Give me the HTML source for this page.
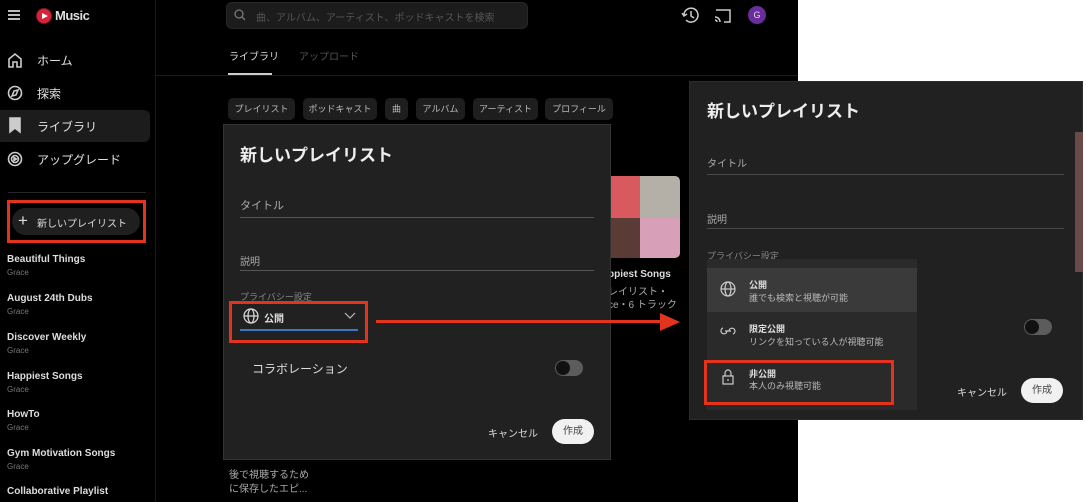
<!DOCTYPE html>
<html><head><meta charset="utf-8"><style>
*{margin:0;padding:0;box-sizing:border-box}
body{width:1086px;height:502px;overflow:hidden;background:#fff;position:relative;font-family:"Liberation Sans","Noto Sans CJK JP",sans-serif;color:#fff}
.a{position:absolute;white-space:nowrap}
.left{position:absolute;left:0;top:0;width:798px;height:502px;background:#000;overflow:hidden}
.nav{font-size:12px;color:#e0e0e0}
.pl{font-size:10px;font-weight:bold;color:#ddd}
.gr{font-size:8px;color:#777}
.chip{position:absolute;top:98px;height:22px;background:#1e1e1e;border-radius:5px;font-size:9px;color:#bbb;text-align:center;line-height:22px}
.dlg{position:absolute;background:#212121;border:1px solid #333}
.lbl{font-size:10px;color:#aaa}
.line{position:absolute;height:1px;background:#555}
.red{position:absolute;border:3px solid #e2341d}
.tog{position:absolute;width:28px;height:16px;border-radius:8px;background:#5c5c5c}
.tog:before{content:"";position:absolute;left:1px;top:1px;width:14px;height:14px;border-radius:50%;background:#111}
.btn{position:absolute;background:#f1f1f1;color:#444;border-radius:13px;font-size:10px;text-align:center}
</style></head><body>
<div class="left">
<div class="a" style="left:8px;top:10px;width:12px;height:2px;background:#bbb;box-shadow:0 4px 0 #bbb,0 8px 0 #bbb"></div>
<div class="a" style="left:37px;top:9px;width:14px;height:14px;border-radius:50%;background:#d9223a;box-shadow:0 0 0 1px #7a1a22"></div>
<div class="a" style="left:42px;top:13px;width:0;height:0;border-left:6px solid #fff;border-top:3.5px solid transparent;border-bottom:3.5px solid transparent"></div>
<div class="a" style="left:55px;top:8px;font-size:13px;font-weight:bold;color:#ddd;letter-spacing:-0.5px">Music</div>
<div class="a" style="left:0;top:110px;width:150px;height:32px;background:#1c1c1c;border-radius:0 6px 6px 0"></div>
<svg class="a" style="left:6px;top:50px" width="18" height="120" fill="none" stroke="#ccc" stroke-width="1.6">
<path d="M3 17V9l6-5 6 5v8h-4v-5H7v5z"/>
<circle cx="9" cy="43" r="6.5"/><path d="M6 46l2-5 4-1-2 5z"/>
<path d="M4 68h10v14l-5-4-5 4z" fill="#ccc"/>
<circle cx="9" cy="109" r="6.5"/><circle cx="9" cy="109" r="3.5"/><path d="M8 107.5l2.5 1.5-2.5 1.5z" fill="#ccc"/>
</svg>
<div class="a nav" style="left:37px;top:52px">ホーム</div>
<div class="a nav" style="left:37px;top:85px">探索</div>
<div class="a nav" style="left:37px;top:118px">ライブラリ</div>
<div class="a nav" style="left:37px;top:151px">アップグレード</div>
<div class="a" style="left:8px;top:192px;width:138px;height:1px;background:#262626"></div>
<div class="a" style="left:155px;top:0;width:1px;height:502px;background:#1a1a1a"></div>
<div class="a" style="left:12px;top:208px;width:128px;height:27px;background:#1f1f1f;border-radius:14px"></div>
<div class="a" style="left:18px;top:211px;font-size:17px;color:#ddd">+</div>
<div class="a" style="left:37px;top:215px;font-size:10px;color:#ddd">新しいプレイリスト</div>
<div class="red" style="left:7px;top:200px;width:139px;height:43px"></div>
<div class="a pl" style="left:7px;top:254px">Beautiful Things</div><div class="a gr" style="left:7px;top:268px">Grace</div>
<div class="a pl" style="left:7px;top:293px">August 24th Dubs</div><div class="a gr" style="left:7px;top:307px">Grace</div>
<div class="a pl" style="left:7px;top:332px">Discover Weekly</div><div class="a gr" style="left:7px;top:346px">Grace</div>
<div class="a pl" style="left:7px;top:371px">Happiest Songs</div><div class="a gr" style="left:7px;top:385px">Grace</div>
<div class="a pl" style="left:7px;top:409px">HowTo</div><div class="a gr" style="left:7px;top:423px">Grace</div>
<div class="a pl" style="left:7px;top:448px">Gym Motivation Songs</div><div class="a gr" style="left:7px;top:462px">Grace</div>
<div class="a pl" style="left:7px;top:486px">Collaborative Playlist</div>
<div class="a" style="left:226px;top:2px;width:302px;height:27px;background:#1c1c1c;border-radius:6px;border:1px solid #262626"></div>
<svg class="a" style="left:234px;top:9px" width="12" height="12" fill="none" stroke="#777" stroke-width="1.3"><circle cx="5" cy="5" r="4"/><path d="M8 8l3 3"/></svg>
<div class="a" style="left:256px;top:9px;font-size:10px;color:#555">曲、アルバム、アーティスト、ポッドキャストを検索</div>
<div class="a" style="left:528px;top:0;width:270px;height:30px;background:#000"></div>
<svg class="a" style="left:681px;top:6px" width="90" height="20" fill="none" stroke="#ccc" stroke-width="1.5">
<path d="M3 9a7 7 0 1 1 2 5"/><path d="M1 7l2 3 3-2"/><path d="M10 5v5l3 2"/>
<path d="M35 4h14v12h-6"/><path d="M34 8v0M34 11a5 5 0 0 1 5 5M34 14a2 2 0 0 1 2 2"/>
</svg>
<div class="a" style="left:748px;top:6px;width:18px;height:18px;border-radius:50%;background:#6a2d9c;font-size:9px;text-align:center;line-height:18px;color:#ddd">G</div>
<div class="a" style="left:229px;top:48px;font-size:10px;color:#ddd">ライブラリ</div>
<div class="a" style="left:299px;top:48px;font-size:10px;color:#555">アップロード</div>
<div class="a" style="left:228px;top:73px;width:44px;height:2px;background:#ccc"></div>
<div class="a" style="left:155px;top:75px;width:643px;height:1px;background:#1c1c1c"></div>
<div class="chip" style="left:228px;width:67px">プレイリスト</div>
<div class="chip" style="left:303px;width:74px">ポッドキャスト</div>
<div class="chip" style="left:385px;width:23px">曲</div>
<div class="chip" style="left:416px;width:49px">アルバム</div>
<div class="chip" style="left:473px;width:65px">アーティスト</div>
<div class="chip" style="left:545px;width:68px">プロフィール</div>
<div class="a" style="left:610px;top:176px;width:30px;height:42px;background:#d85a5e"></div>
<div class="a" style="left:640px;top:176px;width:40px;height:42px;background:#b4b0a8;border-radius:0 5px 0 0"></div>
<div class="a" style="left:610px;top:218px;width:30px;height:40px;background:#5a3b36"></div>
<div class="a" style="left:640px;top:218px;width:40px;height:40px;background:#d8a0b8;border-radius:0 0 5px 0"></div>
<div class="a" style="left:608px;top:269px;font-size:10px;font-weight:bold;color:#ddd">ppiest Songs</div>
<div class="a" style="left:608px;top:283px;font-size:10px;color:#aaa">レイリスト・</div>
<div class="a" style="left:608px;top:296px;font-size:10px;color:#aaa">ce・6 トラック</div>
<div class="a" style="left:229px;top:466px;font-size:10px;color:#aaa">後で視聴するため</div>
<div class="a" style="left:229px;top:480px;font-size:10px;color:#aaa">に保存したエピ...</div>
<div class="dlg" style="left:223px;top:124px;width:388px;height:336px"></div>
<div class="a" style="left:240px;top:141px;font-size:17px;font-weight:bold;color:#eee">新しいプレイリスト</div>
<div class="a lbl" style="left:240px;top:197px;font-size:11px">タイトル</div>
<div class="line" style="left:240px;top:217px;width:354px"></div>
<div class="a lbl" style="left:240px;top:253px">説明</div>
<div class="line" style="left:240px;top:270px;width:354px"></div>
<div class="a lbl" style="left:240px;top:290px;font-size:9px;color:#888">プライバシー設定</div>
<svg class="a" style="left:243px;top:308px" width="16" height="16" fill="none" stroke="#ddd" stroke-width="1.2"><circle cx="8" cy="8" r="7"/><ellipse cx="8" cy="8" rx="3" ry="7"/><path d="M1 8h14"/></svg>
<div class="a" style="left:264px;top:310px;font-size:10px;font-weight:bold;color:#ddd">公開</div>
<svg class="a" style="left:344px;top:312px" width="12" height="8" fill="none" stroke="#bbb" stroke-width="1.2"><path d="M1 1l5 5 5-5"/></svg>
<div class="a" style="left:240px;top:329px;width:118px;height:2px;background:#3b78c4"></div>
<div class="red" style="left:229px;top:301px;width:139px;height:42px"></div>
<div class="a" style="left:252px;top:360px;font-size:12px;color:#ddd">コラボレーション</div>
<div class="tog" style="left:555px;top:360px"></div>
<div class="a" style="left:488px;top:425px;font-size:10px;color:#ddd">キャンセル</div>
<div class="btn" style="left:552px;top:419px;width:42px;height:25px;line-height:25px">作成</div>
<div class="a" style="left:376px;top:320px;width:286px;height:3px;background:#e2341d"></div>
<div class="a" style="left:660px;top:313px;width:0;height:0;border-left:20px solid #e2341d;border-top:9px solid transparent;border-bottom:9px solid transparent"></div>
</div>
<div class="a" style="left:689px;top:81px;width:394px;height:339px;background:#212121;border:1px solid #2c2c2c"></div>
<div class="a" style="left:1075px;top:132px;width:8px;height:140px;background:#6a4a48"></div>
<div class="a" style="left:707px;top:97px;font-size:17px;font-weight:bold;color:#eee">新しいプレイリスト</div>
<div class="a lbl" style="left:707px;top:155px">タイトル</div>
<div class="line" style="left:707px;top:174px;width:357px;background:#4a4a4a"></div>
<div class="a lbl" style="left:707px;top:211px">説明</div>
<div class="line" style="left:707px;top:228px;width:357px;background:#4a4a4a"></div>
<div class="a lbl" style="left:707px;top:249px;font-size:9px;color:#888">プライバシー設定</div>
<div class="tog" style="left:1024px;top:319px"></div>
<div class="a" style="left:957px;top:384px;font-size:10px;color:#ddd">キャンセル</div>
<div class="btn" style="left:1021px;top:378px;width:42px;height:25px;line-height:25px">作成</div>
<div class="a" style="left:707px;top:259px;width:210px;height:151px;background:#2a2a2a"></div>
<div class="a" style="left:707px;top:268px;width:210px;height:44px;background:#3a3a3a"></div>
<svg class="a" style="left:719px;top:280px" width="18" height="120" fill="none" stroke="#ccc" stroke-width="1.2">
<circle cx="9" cy="9" r="7"/><ellipse cx="9" cy="9" rx="3" ry="7"/><path d="M2 9h14"/>
<path d="M8 51a3 3 0 1 1-4-3M10 51a3 3 0 1 1 4 3M6 51h6" />
<rect x="4" y="96" width="10" height="8"/><path d="M6 96v-3a3 3 0 0 1 6 0v3"/><path d="M9 99v2"/>
</svg>
<div class="a" style="left:749px;top:278px;font-size:9px;font-weight:bold;color:#ddd">公開</div>
<div class="a" style="left:749px;top:291px;font-size:9px;color:#bbb">誰でも検索と視聴が可能</div>
<div class="a" style="left:749px;top:322px;font-size:9px;font-weight:bold;color:#ddd">限定公開</div>
<div class="a" style="left:749px;top:335px;font-size:9px;color:#bbb">リンクを知っている人が視聴可能</div>
<div class="a" style="left:749px;top:367px;font-size:9px;font-weight:bold;color:#ddd">非公開</div>
<div class="a" style="left:749px;top:379px;font-size:9px;color:#bbb">本人のみ視聴可能</div>
<div class="red" style="left:704px;top:360px;width:190px;height:45px"></div>
</body></html>
